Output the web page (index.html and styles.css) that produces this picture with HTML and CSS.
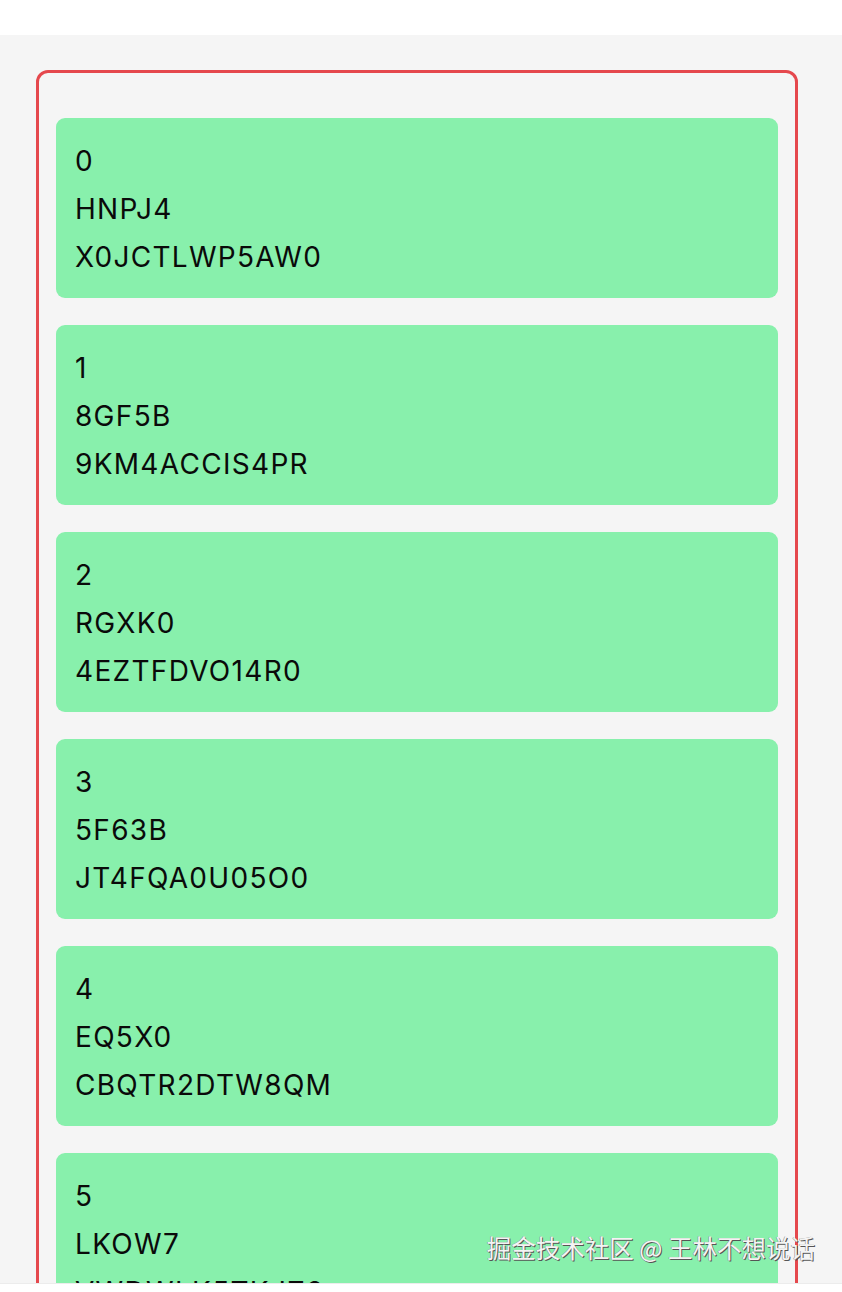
FILE: index.html
```html
<!DOCTYPE html>
<html>
<head>
<meta charset="utf-8">
<link rel="stylesheet" href="styles.css">
</head>
<body>
<div class="top"></div>
<div class="viewport">
  <div class="list">
    <div class="card"><div>0</div><div>HNPJ4</div><div>X0JCTLWP5AW0</div></div>
    <div class="card"><div>1</div><div>8GF5B</div><div>9KM4ACCIS4PR</div></div>
    <div class="card"><div>2</div><div>RGXK0</div><div>4EZTFDVO14R0</div></div>
    <div class="card"><div>3</div><div>5F63B</div><div>JT4FQA0U05O0</div></div>
    <div class="card"><div>4</div><div>EQ5X0</div><div>CBQTR2DTW8QM</div></div>
    <div class="card"><div>5</div><div>LKOW7</div><div>VWDWLK5TKJZ2</div></div>
    <div class="card"><div>6</div><div>A1B2C</div><div>D3E4F5G6H7I8</div></div>
  </div>
  <div class="watermark">掘金技术社区 @ 王林不想说话</div>
</div>
</body>
</html>
```
FILE: styles.css
```css
html, body {
  margin: 0;
  padding: 0;
  background: #ffffff;
}
body {
  font-family: Inter, "Liberation Sans", Arial, "Noto Sans CJK SC", sans-serif;
  width: 842px;
  height: 1292px;
  overflow: hidden;
}
.top {
  height: 35px;
  background: #ffffff;
}
.viewport {
  position: relative;
  height: 1249px;
  background: #f5f5f5;
  border-bottom: 1px solid #ececec;
  overflow: hidden;
  padding: 35px 44px 0 36px;
  box-sizing: border-box;
}
.list {
  border: 3px solid #e5484d;
  border-radius: 12px;
  padding: 18px 17px 18px 17px;
  display: flex;
  flex-direction: column;
  gap: 27px;
}
.list::before {
  content: "";
  display: block;
  height: 0;
}
.card {
  background: #88f0ac;
  border-radius: 9px;
  padding: 19px 18px 17px 19px;
  font-size: 28px;
  line-height: 48px;
  letter-spacing: 1.3px;
  color: #0a0a0a;
}
.watermark {
  position: absolute;
  right: 27px;
  bottom: 20px;
  font-family: "Noto Sans CJK SC", sans-serif;
  font-size: 24.5px;
  line-height: 30px;
  color: #f4f4f4;
  text-shadow: 1px 1px 0 #555555, -0.5px -0.5px 0 #888888;
}
```
